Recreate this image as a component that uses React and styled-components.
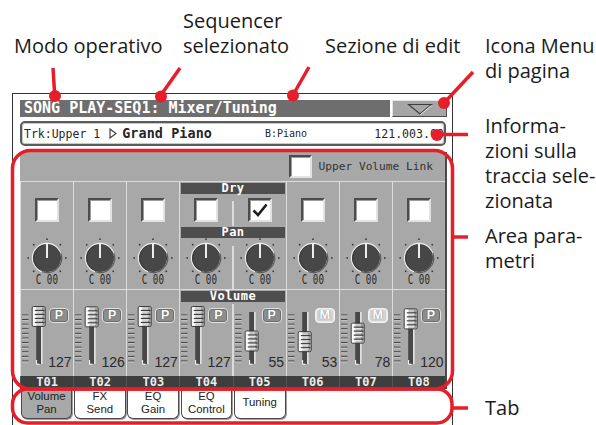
import React from 'react';
import styled, { createGlobalStyle } from 'styled-components';

const RED = '#e61e2a';
const LINE = '#dcdcdc';
const MONO = '"DejaVu Sans Mono", "Liberation Mono", monospace';

const Global = createGlobalStyle`
  html, body { margin: 0; padding: 0; background: #fff; }
  body { width: 596px; height: 425px; overflow: hidden; }
`;

const Canvas = styled.div`
  position: relative;
  width: 596px;
  height: 425px;
  overflow: hidden;
  background: #fff;
`;

const Callout = styled.div`
  position: absolute;
  top: ${(p) => p.$top}px;
  left: ${(p) => p.$left}px;
  font-family: "Open Sans", "Noto Sans", sans-serif;
  font-size: 20px;
  line-height: 25px;
  color: #1b1b1b;
  white-space: nowrap;
`;

const OverlaySvg = styled.svg`
  position: absolute;
  left: 0;
  top: 0;
  pointer-events: none;
`;

const Frame = styled.div`
  box-sizing: border-box;
  margin: 93px 0 0 12px;
  width: 441px;
  height: 345px;
  border: 1px solid #333;
  padding: 6px 5px 0 7px;
  background: #fff;
  display: flex;
  flex-direction: column;
`;

const Header = styled.div`
  display: flex;
  gap: 2px;
  height: 17px;
`;

const Title = styled.div`
  flex: 1;
  background: #6e6e6e;
  color: #fff;
  font-family: ${MONO};
  font-weight: bold;
  font-size: 15px;
  line-height: 17px;
  padding-left: 4px;
  white-space: nowrap;
  overflow: hidden;
`;

const MenuButton = styled.div`
  box-sizing: border-box;
  width: 55px;
  background: #a6a6a6;
  border: 1px solid;
  border-color: #e4e4e4 #4d4d4d #4d4d4d #e4e4e4;
  display: flex;
  align-items: center;
  justify-content: center;
`;

const InfoBox = styled.div`
  box-sizing: border-box;
  margin: 4px 1px 0 0;
  height: 25px;
  border: 2px solid #5b5b5b;
  border-radius: 5px;
  box-shadow: inset 0 0 0 1px #c9c9c9;
  background: #fff;
  display: flex;
  align-items: center;
  padding: 0 0 0 2px;
  color: #262626;
  font-family: ${MONO};
  white-space: nowrap;
  overflow: hidden;
`;

const InfoText = styled.span`
  font-size: ${(p) => p.$size}px;
  font-weight: ${(p) => (p.$bold ? 'bold' : 'normal')};
  letter-spacing: ${(p) => p.$ls || 0}px;
  margin-left: ${(p) => p.$ml || 0}px;
`;

const InfoRight = styled.span`
  margin-left: auto;
  font-size: 11.6px;
`;

const Panel = styled.div`
  box-sizing: border-box;
  margin-top: 6px;
  background: #a8a8a8;
  border-right: 2px solid #4a4a4a;
  display: flex;
  flex-direction: column;
`;

const UpperRow = styled.div`
  height: 28.5px;
  border-bottom: 1.5px solid ${LINE};
  display: flex;
  align-items: center;
  justify-content: flex-end;
  gap: 6px;
  padding-right: 12px;
`;

const UpperLabel = styled.span`
  font-family: ${MONO};
  font-size: 11.2px;
  color: #333;
`;

const Band = styled.div`
  display: grid;
  grid-template-columns: repeat(8, 1fr);
  height: ${(p) => p.$h}px;
  border-top: ${(p) => (p.$line ? `1.5px solid ${LINE}` : 'none')};
`;

const Cell = styled.div`
  border-left: 1.5px solid ${LINE};
  display: flex;
  flex-direction: column;
  align-items: center;
  padding-top: ${(p) => p.$pad}px;
  min-width: 0;
`;

const Group = styled.div`
  grid-column: span 2;
  border-left: 1.5px solid ${LINE};
  display: flex;
  flex-direction: column;
  min-width: 0;
`;

const SectionBar = styled.div`
  height: 11px;
  margin: 1px 1px 0 1px;
  background: #4e4e4e;
  color: #fff;
  font-family: ${MONO};
  font-weight: bold;
  font-size: 12px;
  line-height: 11px;
  letter-spacing: 0.5px;
  text-align: center;
`;

const Pair = styled.div`
  display: flex;
  flex: 1;
`;

const PairCell = styled.div`
  flex: 1;
  display: flex;
  flex-direction: column;
  align-items: center;
  padding-top: ${(p) => p.$pad}px;
  min-width: 0;
`;

const PairDivider = styled.div`
  width: 1.5px;
  background: ${LINE};
  margin-top: ${(p) => p.$gap}px;
`;

const CheckBox = styled.span`
  box-sizing: border-box;
  display: flex;
  align-items: center;
  justify-content: center;
  width: ${(p) => p.$size}px;
  height: ${(p) => p.$size}px;
  background: #fff;
  border: 2.5px solid;
  border-color: #4c4c4c #e2e2e2 #e2e2e2 #4c4c4c;
  box-shadow: inset 1px 1px 0 #9c9c9c;
`;

const KnobSvg = styled.svg`
  display: block;
`;

const PanValue = styled.span`
  display: inline-block;
  font-family: ${MONO};
  font-size: 14px;
  line-height: 11px;
  color: #2a2a2a;
  transform: scaleX(0.66);
  white-space: nowrap;
`;

const FaderRow = styled.div`
  display: flex;
  width: 100%;
  height: 67px;
`;

const FaderSvg = styled.svg`
  display: block;
  flex: none;
`;

const Side = styled.div`
  flex: 1;
  display: flex;
  flex-direction: column;
  justify-content: space-between;
  padding: 6px 1.5px 0 1px;
  min-width: 0;
`;

const ModeButton = styled.span`
  box-sizing: border-box;
  align-self: flex-start;
  width: 20px;
  height: 15px;
  border-radius: 4px;
  border: 1px solid ${(p) => (p.$muted ? '#f4f4f4' : '#e2e2e2')};
  background: ${(p) => (p.$muted ? '#d2d2d2' : '#8d8d8d')};
  box-shadow: inset 0 0 0 1px ${(p) => (p.$muted ? '#e8e8e8' : '#6c6c6c')};
  color: #fff;
  font-family: "Liberation Sans", Arial, sans-serif;
  font-weight: bold;
  font-size: 12.5px;
  line-height: 13px;
  text-align: center;
  text-shadow: ${(p) =>
    p.$muted ? '0 0 1px #8a8a8a, 0 0 1px #8a8a8a' : '0 0 1px #333'};
`;

const VolValue = styled.span`
  align-self: flex-end;
  font-family: "Liberation Sans", Arial, sans-serif;
  font-size: 14px;
  line-height: 13px;
  color: #2a2a2a;
`;

const TrackBar = styled.div`
  display: grid;
  grid-template-columns: repeat(8, 1fr);
  height: 12.5px;
  background: #3e3e3e;
`;

const TrackLabel = styled.div`
  border-left: 1px solid #545454;
  color: #ececec;
  font-family: ${MONO};
  font-weight: bold;
  font-size: 12px;
  line-height: 12.5px;
  text-align: center;
`;

const TabRow = styled.div`
  display: flex;
  gap: 1.6px;
  margin-top: 1px;
  padding-left: 0.7px;
`;

const Tab = styled.div`
  box-sizing: border-box;
  width: 51.7px;
  height: 29px;
  border: 1.5px solid #4a4a4a;
  border-top: none;
  border-radius: 0 0 6px 6px;
  background: ${(p) => (p.$active ? '#a8a8a8' : '#fff')};
  box-shadow: 1px 1px 0 #a0a0a0;
  display: flex;
  align-items: center;
  justify-content: center;
  text-align: center;
  font-family: "Liberation Sans", Arial, sans-serif;
  font-size: 11.4px;
  line-height: 13.2px;
  color: #222;
`;

const TabLines = styled.div`
  display: flex;
  flex-direction: column;
  margin-top: -1px;
`;

const channels = [
  { t: 'T01', v: 127, b: 'P', on: false },
  { t: 'T02', v: 126, b: 'P', on: false },
  { t: 'T03', v: 127, b: 'P', on: false },
  { t: 'T04', v: 127, b: 'P', on: false },
  { t: 'T05', v: 55, b: 'P', on: true },
  { t: 'T06', v: 53, b: 'M', on: false },
  { t: 'T07', v: 78, b: 'M', on: false },
  { t: 'T08', v: 120, b: 'P', on: false },
];

const tabs = [
  ['Volume', 'Pan'],
  ['FX', 'Send'],
  ['EQ', 'Gain'],
  ['EQ', 'Control'],
  ['Tuning'],
];

function Check({ on, size = 24 }) {
  return (
    <CheckBox $size={size}>
      {on && (
        <svg width="18" height="18" viewBox="0 0 18 18">
          <path d="M2.5 9.5 L7 14 L15.5 3.5" fill="none" stroke="#1e1e1e" strokeWidth="2.6" />
        </svg>
      )}
    </CheckBox>
  );
}

function Knob() {
  const cx = 21;
  const cy = 20;
  const dots = [-135, -90, -45, 0, 45, 135, 180];
  const arc = (r, a0, a1) => {
    const p = (a) => [cx + r * Math.cos((a * Math.PI) / 180), cy + r * Math.sin((a * Math.PI) / 180)];
    const [x0, y0] = p(a0);
    const [x1, y1] = p(a1);
    return `M${x0} ${y0} A${r} ${r} 0 0 1 ${x1} ${y1}`;
  };
  return (
    <KnobSvg width="42" height="36" viewBox="0 0 42 36">
      {dots.map((a) => (
        <rect
          key={a}
          x={cx + 18.8 * Math.cos((a * Math.PI) / 180) - 0.8}
          y={cy + 18.8 * Math.sin((a * Math.PI) / 180) - 0.8}
          width="1.6"
          height="1.6"
          fill="#3a3a3a"
        />
      ))}
      <circle cx={cx} cy={cy} r="14.6" fill="#474747" stroke="#ededed" strokeWidth="1.1" />
      <path d={arc(14.6, -20, 110)} fill="none" stroke="#5e5e5e" strokeWidth="1.3" />
      <path d={arc(13.2, 120, 250)} fill="none" stroke="#3a3a3a" strokeWidth="1" />
      <line x1={cx} y1={cy} x2={cx} y2="5.6" stroke="#fff" strokeWidth="1.8" />
    </KnobSvg>
  );
}

function Fader({ value }) {
  const c = 14.5 + (127 - value) * 0.34;
  const top = c - 10;
  const ticks = Array.from({ length: 11 }, (_, i) => 13 + i * 4.6);
  return (
    <FaderSvg width="27" height="67" viewBox="0 0 27 67">
      {ticks.map((y) => (
        <g key={y}>
          <line x1="1" y1={y} x2="7.5" y2={y} stroke="#3a3a3a" strokeWidth="1" />
          <line x1="1" y1={y + 1} x2="7.5" y2={y + 1} stroke="#cfcfcf" strokeWidth="0.8" />
        </g>
      ))}
      <rect x="15.2" y="10" width="5" height="52" fill="#484848" />
      <rect x="20.2" y="10" width="1.3" height="52" fill="#f4f4f4" />
      <path d="M15.6 58 V62.2 H18.5" fill="none" stroke="#fff" strokeWidth="1" />
      <rect x="11.2" y={top} width="13" height="20" rx="1.5" fill="#c9c9c9" stroke="#2f2f2f" strokeWidth="0.9" />
      <rect x="11.9" y={top + 0.7} width="3.4" height="18.6" fill="#fafafa" />
      <rect x="21" y={top + 0.7} width="2.6" height="18.6" fill="#9a9a9a" />
      {[4, 8, 12, 16].map((k) => (
        <g key={k}>
          <line x1="13.8" y1={top + k} x2="23.6" y2={top + k} stroke="#3a3a3a" strokeWidth="1.2" />
          <line x1="13.8" y1={top + k + 1.3} x2="22" y2={top + k + 1.3} stroke="#f2f2f2" strokeWidth="0.8" />
        </g>
      ))}
    </FaderSvg>
  );
}

function VolumeContent({ ch }) {
  return (
    <FaderRow>
      <Fader value={ch.v} />
      <Side>
        <ModeButton $muted={ch.b === 'M'}>{ch.b}</ModeButton>
        <VolValue>{ch.v}</VolValue>
      </Side>
    </FaderRow>
  );
}

function PanContent() {
  return (
    <>
      <Knob />
      <PanValue>C 00</PanValue>
    </>
  );
}

function BandRow({ h, line, pad, label, gap, render }) {
  const cells = [];
  channels.forEach((ch, i) => {
    if (i === 3) {
      cells.push(
        <Group key="g">
          <SectionBar>{label}</SectionBar>
          <Pair>
            <PairCell $pad={pad - 12}>{render(channels[3])}</PairCell>
            <PairDivider $gap={gap} />
            <PairCell $pad={pad - 12}>{render(channels[4])}</PairCell>
          </Pair>
        </Group>
      );
    } else if (i !== 4) {
      cells.push(
        <Cell key={ch.t} $pad={pad}>
          {render(ch)}
        </Cell>
      );
    }
  });
  return (
    <Band $h={h} $line={line}>
      {cells}
    </Band>
  );
}

function Overlay() {
  return (
    <OverlaySvg width="596" height="425" viewBox="0 0 596 425">
      <g stroke={RED} strokeWidth="3.5" fill="none">
        <line x1="53" y1="68" x2="54.5" y2="92" />
        <line x1="180" y1="68" x2="161" y2="95" />
        <line x1="309" y1="67" x2="293" y2="95" />
        <line x1="473" y1="72" x2="444" y2="103" />
        <line x1="437" y1="134.5" x2="468" y2="134.5" />
        <rect x="12.5" y="150.5" width="440" height="238.5" rx="18" />
        <rect x="12.5" y="389" width="439.5" height="34" rx="15" />
        <line x1="452.5" y1="237" x2="468" y2="237" />
        <line x1="452" y1="408" x2="468" y2="408" />
      </g>
      <g fill={RED}>
        <circle cx="55" cy="96" r="6" />
        <circle cx="161" cy="96.5" r="6" />
        <circle cx="293" cy="95.5" r="6" />
        <circle cx="444" cy="103" r="6" />
        <circle cx="437" cy="135" r="6" />
      </g>
    </OverlaySvg>
  );
}

export default function App() {
  return (
    <Canvas>
      <Global />
      <Frame>
        <Header>
          <Title>SONG PLAY-SEQ1: Mixer/Tuning</Title>
          <MenuButton>
            <svg width="26" height="12" viewBox="0 0 26 12">
              <path d="M1.5 1.5 H24.5 L13 11 Z" fill="none" stroke="#3c3c3c" strokeWidth="1.1" />
              <path d="M24.5 2.5 L13.5 11.5" fill="none" stroke="#f2f2f2" strokeWidth="1" />
            </svg>
          </MenuButton>
        </Header>
        <InfoBox>
          <InfoText $size={11.5}>Trk:Upper 1</InfoText>
          <svg width="8" height="11" viewBox="0 0 8 11" style={{ marginLeft: 9 }}>
            <path d="M1 1 L7 5.5 L1 10 Z" fill="none" stroke="#333" strokeWidth="1.1" />
          </svg>
          <InfoText $size={13.4} $bold $ls={0.1} $ml={5}>Grand Piano</InfoText>
          <InfoText $size={10} $ml={53}>B:Piano</InfoText>
          <InfoRight>121.003.00</InfoRight>
        </InfoBox>
        <Panel>
          <UpperRow>
            <Check size={23} />
            <UpperLabel>Upper Volume Link</UpperLabel>
          </UpperRow>
          <BandRow h={44} pad={16.3} label="Dry" gap={7} render={(ch) => <Check on={ch.on} />} />
          <BandRow h={63} pad={12.5} label="Pan" gap={8} render={() => <PanContent />} />
          <BandRow h={86.5} line pad={12.5} label="Volume" gap={2} render={(ch) => <VolumeContent ch={ch} />} />
          <TrackBar>
            {channels.map((ch) => (
              <TrackLabel key={ch.t}>{ch.t}</TrackLabel>
            ))}
          </TrackBar>
        </Panel>
        <TabRow>
          {tabs.map((lines, i) => (
            <Tab key={lines.join()} $active={i === 0}>
              <TabLines>
                {lines.map((l) => (
                  <span key={l}>{l}</span>
                ))}
              </TabLines>
            </Tab>
          ))}
        </TabRow>
      </Frame>

      <Callout $top={33} $left={14}>Modo operativo</Callout>
      <Callout $top={8} $left={183}>
        Sequencer
        <br />
        selezionato
      </Callout>
      <Callout $top={33} $left={325}>Sezione di edit</Callout>
      <Callout $top={33} $left={485}>
        Icona Menu
        <br />
        di pagina
      </Callout>
      <Callout $top={113} $left={485}>
        Informa-
        <br />
        zioni sulla
        <br />
        traccia sele-
        <br />
        zionata
      </Callout>
      <Callout $top={223} $left={485}>
        Area para-
        <br />
        metri
      </Callout>
      <Callout $top={395} $left={485}>Tab</Callout>

      <Overlay />
    </Canvas>
  );
}
